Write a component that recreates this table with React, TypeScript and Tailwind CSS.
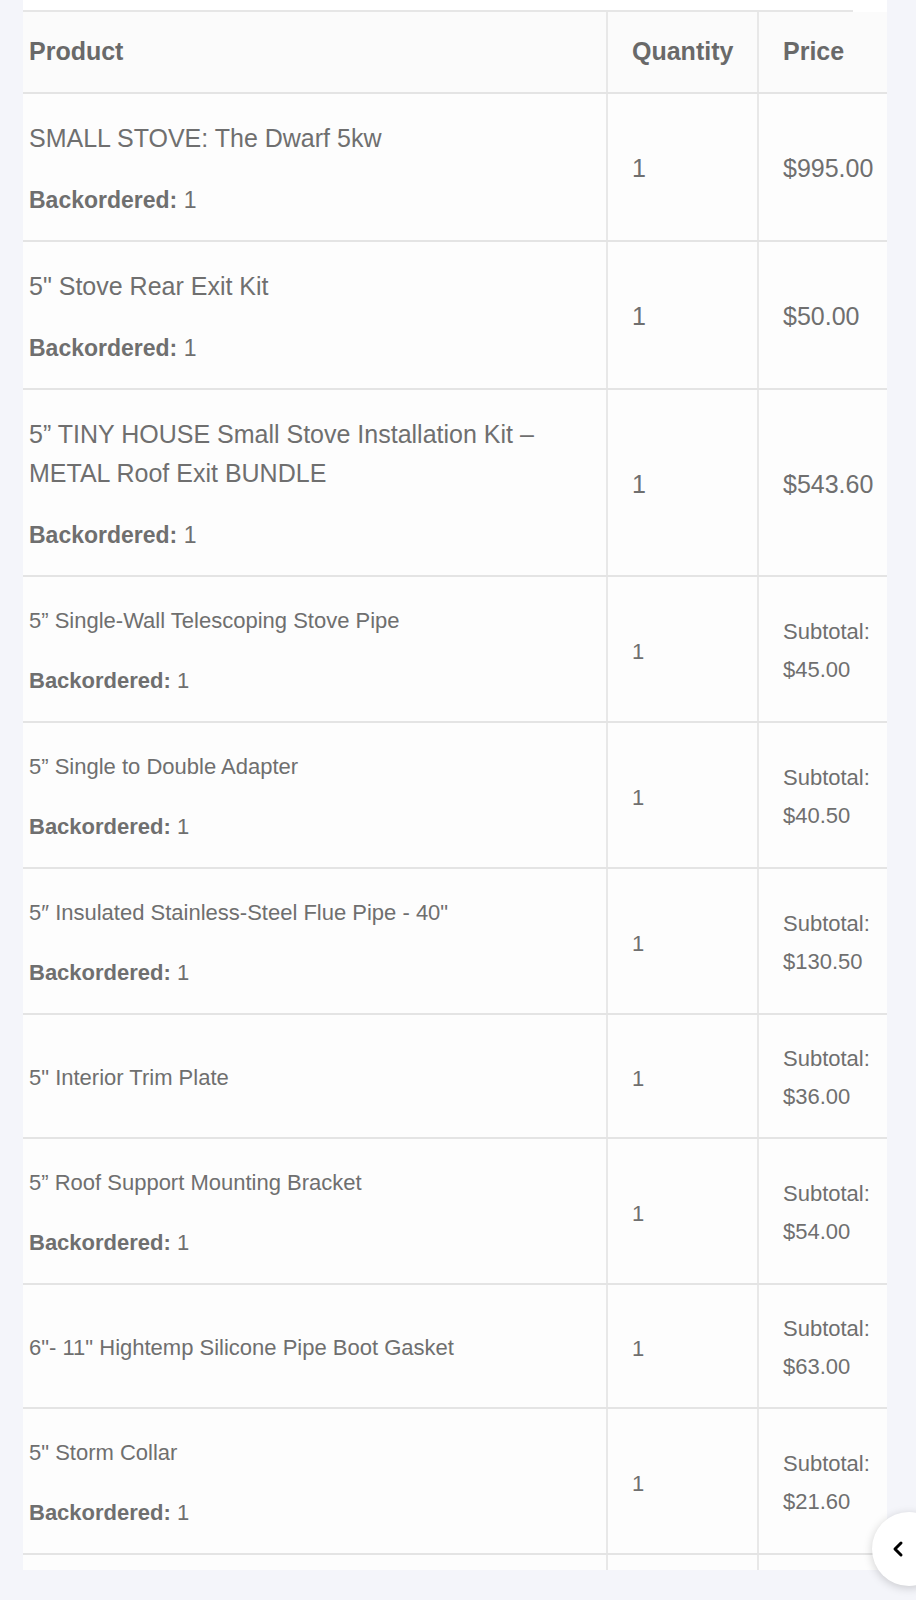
import { ChevronLeft } from 'lucide-react';

interface Item {
  name: string;
  backordered: boolean;
  price: string;
  big: boolean;
}

const items: Item[] = [
  { name: 'SMALL STOVE: The Dwarf 5kw', backordered: true, price: '$995.00', big: true },
  { name: '5" Stove Rear Exit Kit', backordered: true, price: '$50.00', big: true },
  {
    name: '5” TINY HOUSE Small Stove Installation Kit – METAL Roof Exit BUNDLE',
    backordered: true,
    price: '$543.60',
    big: true,
  },
  { name: '5” Single-Wall Telescoping Stove Pipe', backordered: true, price: '$45.00', big: false },
  { name: '5” Single to Double Adapter', backordered: true, price: '$40.50', big: false },
  { name: '5″ Insulated Stainless-Steel Flue Pipe - 40"', backordered: true, price: '$130.50', big: false },
  { name: '5" Interior Trim Plate', backordered: false, price: '$36.00', big: false },
  { name: '5” Roof Support Mounting Bracket', backordered: true, price: '$54.00', big: false },
  { name: '6"- 11" Hightemp Silicone Pipe Boot Gasket', backordered: false, price: '$63.00', big: false },
  { name: '5" Storm Collar', backordered: true, price: '$21.60', big: false },
];

function ItemRow({ item }: { item: Item }) {
  return (
    <div className="flex border-b-2 border-[#e4e4e4] bg-[#fdfdfd]">
      <div className="w-[585px] shrink-0 border-r-2 border-[#e8e8e8] pl-[6px] pr-6 pt-[25px] pb-[21px] flex flex-col justify-center">
        <p className={item.big ? 'text-[25px] leading-[39px]' : 'text-[22px] leading-[38px]'}>{item.name}</p>
        {item.backordered && (
          <p
            className={
              item.big ? 'mt-[23px] text-[23px] leading-[38px]' : 'mt-[22px] text-[22px] leading-[38px]'
            }
          >
            <strong className="font-bold">Backordered:</strong> 1
          </p>
        )}
      </div>
      <div
        className={
          item.big
            ? 'w-[151px] shrink-0 border-r-2 border-[#e8e8e8] pl-6 pt-[25px] pb-[21px] flex items-center text-[25px]'
            : 'w-[151px] shrink-0 border-r-2 border-[#e8e8e8] pl-6 pt-[25px] pb-[21px] flex items-center text-[22px]'
        }
      >
        1
      </div>
      <div className="flex-1 pl-6 pt-[25px] pb-[21px] flex items-center whitespace-nowrap">
        {item.big ? (
          <span className="text-[25px]">{item.price}</span>
        ) : (
          <div className="text-[22px] leading-[38px]">
            <div>Subtotal:</div>
            <div>{item.price}</div>
          </div>
        )}
      </div>
    </div>
  );
}

export default function App() {
  return (
    <div
      className="relative w-full h-[1600px] overflow-hidden bg-[#f4f5fa] text-[#6f6f6f]"
      style={{ fontFamily: '"Liberation Sans", Arial, sans-serif' }}
    >
      <div className="ml-[23px] w-[864px] h-[1570px] overflow-hidden bg-white">
        <div className="h-[10px]" />
        <div className="h-[2px] w-[830px] bg-[#e6e6e6]" />

        {/* header */}
        <div className="flex h-[82px] border-b-2 border-[#e4e4e4] bg-[#fbfbfb] text-[25px] font-bold text-[#696969]">
          <div className="w-[585px] shrink-0 border-r-2 border-[#e8e8e8] pl-[6px] flex items-center">Product</div>
          <div className="w-[151px] shrink-0 border-r-2 border-[#e8e8e8] pl-6 flex items-center">Quantity</div>
          <div className="flex-1 pl-6 flex items-center">Price</div>
        </div>

        {items.map((item) => (
          <ItemRow key={item.name} item={item} />
        ))}

        <div className="flex h-[200px] bg-[#fdfdfd]">
          <div className="w-[585px] shrink-0 border-r-2 border-[#e8e8e8]" />
          <div className="w-[151px] shrink-0 border-r-2 border-[#e8e8e8]" />
          <div className="flex-1" />
        </div>
      </div>

      <button className="absolute left-[872px] top-[1512px] w-[74px] h-[74px] rounded-full bg-white shadow-[0_2px_10px_rgba(0,0,0,0.18)] flex items-center pl-[14px]">
        <ChevronLeft className="w-[24px] h-[24px] text-black" strokeWidth={3} />
      </button>
    </div>
  );
}
